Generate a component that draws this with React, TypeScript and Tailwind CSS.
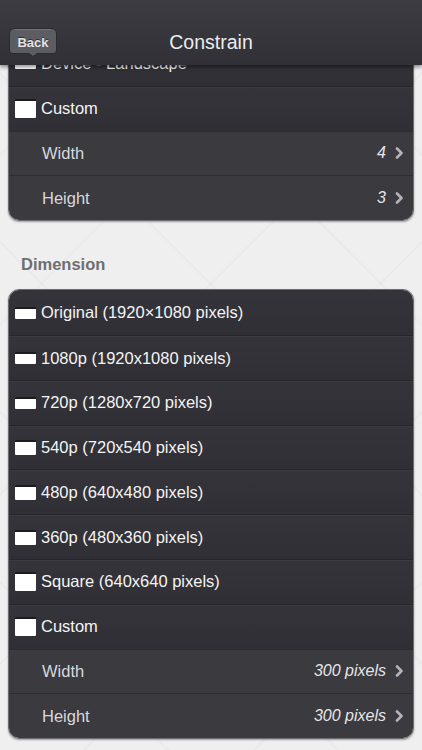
import React from "react";

type CheckRow = { kind: "check"; label: string; w: number; h: number };
type ValueRow = { kind: "value"; label: string; value: string };
type Row = CheckRow | ValueRow;

const card1: Row[] = [
  { kind: "check", label: "Device - Landscape", w: 21, h: 12 },
  { kind: "check", label: "Custom", w: 21, h: 19 },
  { kind: "value", label: "Width", value: "4" },
  { kind: "value", label: "Height", value: "3" },
];

const card2: Row[] = [
  { kind: "check", label: "Original (1920×1080 pixels)", w: 21, h: 12 },
  { kind: "check", label: "1080p (1920x1080 pixels)", w: 21, h: 12 },
  { kind: "check", label: "720p (1280x720 pixels)", w: 21, h: 12 },
  { kind: "check", label: "540p (720x540 pixels)", w: 21, h: 15 },
  { kind: "check", label: "480p (640x480 pixels)", w: 21, h: 15 },
  { kind: "check", label: "360p (480x360 pixels)", w: 21, h: 15 },
  { kind: "check", label: "Square (640x640 pixels)", w: 21, h: 19 },
  { kind: "check", label: "Custom", w: 21, h: 19 },
  { kind: "value", label: "Width", value: "300 pixels" },
  { kind: "value", label: "Height", value: "300 pixels" },
];

function Chevron() {
  return (
    <svg width="9" height="12" viewBox="0 0 9 12" className="ml-[9px] mr-[9px]">
      <path d="M2 1.5 L6.5 6 L2 10.5" fill="none" stroke="#b4b4b8" strokeWidth="2.6" strokeLinecap="round" strokeLinejoin="round" />
    </svg>
  );
}

function RowView({ row, first }: { row: Row; first: boolean }) {
  if (row.kind === "check") {
    return (
      <div
        className={`h-[44.8px] flex items-center pl-[6px] bg-[linear-gradient(#34343a,#2f2f35)] ${
          first ? "" : "border-t border-t-[#25252a] shadow-[inset_0_1px_0_#3a3a40]"
        }`}
      >
        <div className="w-[21px] flex items-center justify-start">
          <div
            className="bg-white border-t-2 border-t-[#1c1c1c] rounded-[1px]"
            style={{ width: row.w, height: row.h }}
          />
        </div>
        <span className="ml-[5px] text-[16.5px] text-[#f4f4f4]">{row.label}</span>
      </div>
    );
  }
  return (
    <div className="h-[44.8px] flex items-center pl-[33px] bg-[#3a3a3f] border-t border-t-[#2c2c31]">
      <span className="text-[16.5px] text-[#d8d8dc] flex-1">{row.label}</span>
      <span className="text-[16px] italic text-[#e6e6e8]">{row.value}</span>
      <Chevron />
    </div>
  );
}

function Card({ rows }: { rows: Row[] }) {
  return (
    <div className="mx-[8px] rounded-[11px] overflow-hidden border border-[#6e6e72] shadow-[0_1px_2px_rgba(0,0,0,0.35)]">
      {rows.map((r, i) => (
        <RowView key={i} row={r} first={i === 0} />
      ))}
    </div>
  );
}

export default function App() {
  return (
    <div
      className="relative w-[422px] h-[750px] overflow-hidden bg-[#efefef] bg-[repeating-linear-gradient(45deg,transparent_0_118px,rgba(0,0,0,0.018)_118px_120px),repeating-linear-gradient(-45deg,transparent_0_118px,rgba(0,0,0,0.018)_118px_120px)]"
      style={{ fontFamily: '"Liberation Sans", Arial, sans-serif' }}
    >
      <div className="pt-[40px]">
        <Card rows={card1} />
        <div className="pt-[34px] pb-[15px] pl-[21px] text-[16.5px] font-bold text-[#6e6e72] leading-[19px]">
          Dimension
        </div>
        <Card rows={card2} />
      </div>

      <div className="absolute top-0 left-0 w-full h-[65px] bg-[linear-gradient(#3c3c42,#303036)] shadow-[0_2px_4px_rgba(0,0,0,0.45)] flex items-end justify-center pb-[12px]">
        <div className="absolute left-[9px] top-[28px] w-[48px] h-[30px]">
          <svg width="48" height="30" viewBox="0 0 48 30" className="absolute inset-0">
            <path
              d="M6 0.5 H42 Q47.5 0.5 47.5 6 V22 Q47.5 25.5 44 25.5 H28 L24 28.5 L20 25.5 H4 Q0.5 25.5 0.5 22 V6 Q0.5 0.5 6 0.5 Z"
              fill="#5c5d63"
              stroke="#2a2a2f"
              strokeWidth="1"
            />
            <path d="M6 1.5 H42" stroke="#75767c" strokeWidth="1" />
          </svg>
          <span className="absolute left-0 top-[5px] w-full text-center text-[13px] font-bold text-[#e4e4e6] [text-shadow:0_-1px_0_rgba(0,0,0,0.5)]">
            Back
          </span>
        </div>
        <span className="text-[19.5px] text-[#ececee] leading-[22px]">Constrain</span>
      </div>
    </div>
  );
}
